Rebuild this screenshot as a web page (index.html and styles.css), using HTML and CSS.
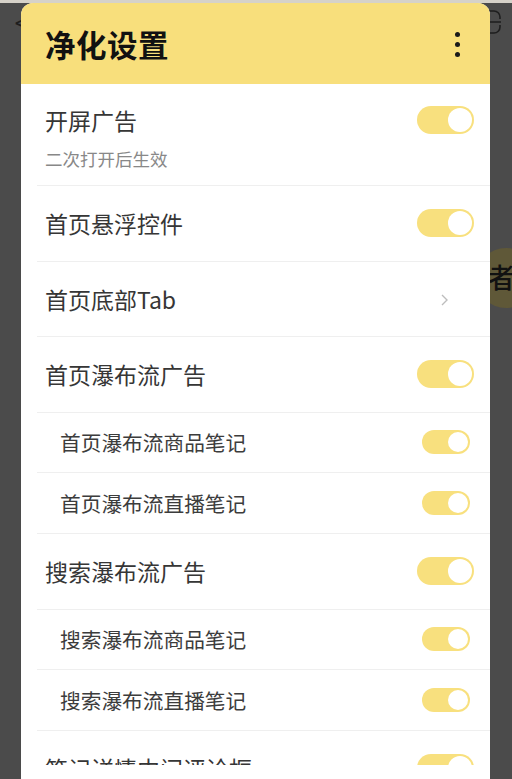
FILE: index.html
```html
<!DOCTYPE html>
<html lang="zh">
<head>
<meta charset="utf-8">
<link rel="stylesheet" href="styles.css">
</head>
<body>
<div class="screen">
  <div class="topstrip"></div>
  <div class="bg-back">&lt;</div>
  <svg class="bg-scan" width="14" height="26" viewBox="0 0 14 26"><path d="M0 2 H6 A6 6 0 0 1 12 8 V10 M0 13 H13 M0 24 H6 A6 6 0 0 0 12 18 V16" fill="none" stroke="#1e1e1e" stroke-width="1.6"/></svg>
  <div class="bg-badge"><span>者</span></div>

  <div class="dialog">
    <div class="header">
      <div class="title">净化设置</div>
      <div class="menu"><i></i><i></i><i></i></div>
    </div>
    <div class="list">
      <div class="row first">
        <div class="texts">
          <div class="label">开屏广告</div>
          <div class="sub">二次打开后生效</div>
        </div>
        <div class="toggle"><i></i></div>
      </div>
      <div class="row main">
        <div class="label">首页悬浮控件</div>
        <div class="toggle"><i></i></div>
      </div>
      <div class="row main">
        <div class="label">首页底部Tab</div>
        <svg class="chev" width="7" height="12" viewBox="0 0 7 12"><path d="M1 1 L6 6 L1 11" fill="none" stroke="#bdbdbd" stroke-width="1.4"/></svg>
      </div>
      <div class="row main">
        <div class="label">首页瀑布流广告</div>
        <div class="toggle"><i></i></div>
      </div>
      <div class="row child">
        <div class="label">首页瀑布流商品笔记</div>
        <div class="toggle small"><i></i></div>
      </div>
      <div class="row child">
        <div class="label">首页瀑布流直播笔记</div>
        <div class="toggle small"><i></i></div>
      </div>
      <div class="row main">
        <div class="label">搜索瀑布流广告</div>
        <div class="toggle"><i></i></div>
      </div>
      <div class="row child">
        <div class="label">搜索瀑布流商品笔记</div>
        <div class="toggle small"><i></i></div>
      </div>
      <div class="row child">
        <div class="label">搜索瀑布流直播笔记</div>
        <div class="toggle small"><i></i></div>
      </div>
      <div class="row main">
        <div class="label">笔记详情中间评论框</div>
        <div class="toggle"><i></i></div>
      </div>
    </div>
    <div class="foot"></div>
  </div>
</div>
</body>
</html>
```

FILE: styles.css
```css
html, body {
  margin: 0;
  padding: 0;
}
body {
  background: #4b4b4b;
  font-family: "Noto Sans CJK SC", "Noto Sans", sans-serif;
  overflow: hidden;
}
.screen {
  position: relative;
  width: 512px;
  height: 779px;
  overflow: hidden;
  padding-top: 3px;
  box-sizing: border-box;
}
.topstrip {
  position: absolute;
  left: 0;
  top: 0;
  width: 512px;
  height: 3px;
  background: #d6d2c9;
}
.bg-back {
  position: absolute;
  left: 12px;
  top: 10px;
  font-size: 22px;
  line-height: 26px;
  color: #1e1e1e;
  font-family: "DejaVu Sans", sans-serif;
  transform: scaleX(0.8);
}
.bg-scan {
  position: absolute;
  left: 488px;
  top: 9px;
}
.bg-badge {
  position: absolute;
  left: 476px;
  top: 248px;
  width: 60px;
  height: 60px;
  border-radius: 50%;
  background: #5f5838;
}
.bg-badge span {
  position: absolute;
  left: 12px;
  top: 12px;
  font-size: 27px;
  line-height: 34px;
  color: #111;
  font-weight: 500;
}
.dialog {
  position: relative;
  margin-left: 21px;
  width: 469px;
  height: 776px;
  background: #fff;
  border-radius: 12px 12px 0 0;
  overflow: hidden;
  display: flex;
  flex-direction: column;
}
.header {
  height: 81px;
  flex: none;
  background: #f8df7c;
  display: flex;
  align-items: center;
  justify-content: space-between;
  padding: 0 30px 0 24px;
}
.title {
  font-size: 30.5px;
  font-weight: 700;
  color: #111;
  line-height: 40px;
  letter-spacing: 0.5px;
}
.menu {
  display: flex;
  flex-direction: column;
  gap: 5px;
  padding-top: 2px;
}
.menu i {
  display: block;
  width: 5px;
  height: 5px;
  border-radius: 50%;
  background: #1a1a1a;
}
.list {
  height: 681px;
  flex: none;
  overflow: hidden;
}
.foot {
  flex: 1;
  background: #fff;
}
.row {
  margin-left: 16px;
  border-bottom: 1px solid #efefef;
  display: flex;
  align-items: center;
  justify-content: space-between;
  box-sizing: border-box;
}
.row.first {
  height: 102px;
  padding: 21px 16px 14px 8px;
  align-items: flex-start;
}
.row.first .toggle {
  margin-top: 1px;
}
.row.main {
  height: 75.5px;
  padding: 0 16px 0 8px;
}
.row.child {
  height: 60.75px;
  padding: 0 20px 0 23px;
}
.label {
  font-size: 23px;
  line-height: 30px;
  color: #363636;
}
.row.child .label {
  font-size: 20.7px;
  line-height: 28px;
  color: #3c3c3c;
}
.sub {
  margin-top: 12px;
  font-size: 17.5px;
  line-height: 24px;
  color: #888;
}
.toggle {
  position: relative;
  width: 57px;
  height: 28px;
  border-radius: 14px;
  background: #f8e07e;
  flex: none;
}
.toggle i {
  position: absolute;
  right: 2px;
  top: 2px;
  width: 24px;
  height: 24px;
  border-radius: 50%;
  background: #fff;
}
.toggle.small {
  width: 48px;
  height: 24px;
  border-radius: 12px;
}
.toggle.small i {
  width: 20px;
  height: 20px;
}
.chev {
  margin-right: 26px;
  margin-top: 3px;
}
```
